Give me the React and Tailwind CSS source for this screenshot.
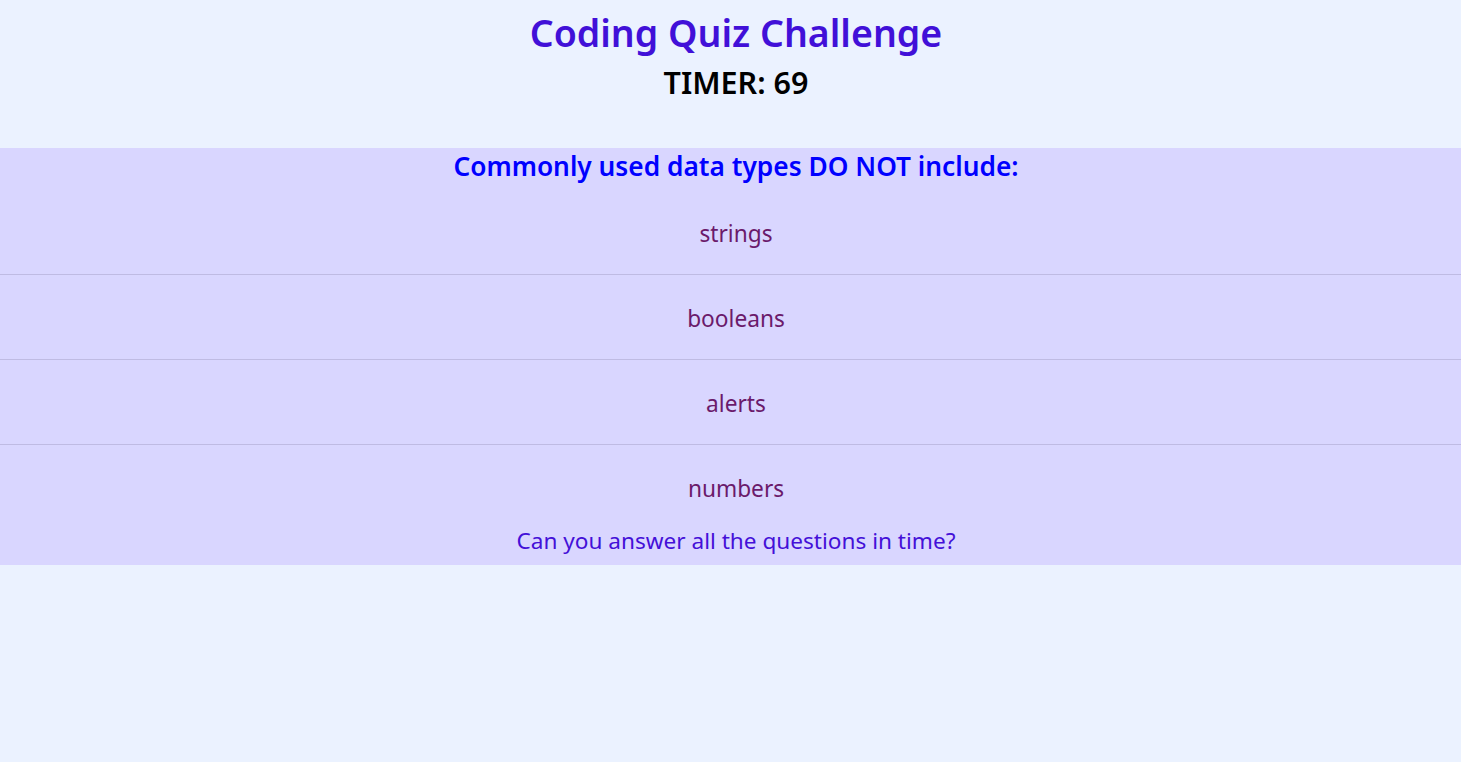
import React from 'react';

const answers = ['strings', 'booleans', 'alerts', 'numbers'];

export default function App() {
  return (
    <div
      className="w-full min-h-[762px] bg-[#ebf2ff] text-center"
      style={{ fontFamily: '"Noto Sans", "Open Sans", sans-serif' }}
    >
      {/* header */}
      <header className="pt-[8px] pl-[11px] h-[148px]">
        <h1 className="text-[37.5px] leading-[50px] font-semibold text-[#4110d8]">Coding Quiz Challenge</h1>
        <h2 className="mt-[4px] text-[30.5px] leading-[40px] font-semibold text-black">TIMER: 69</h2>
      </header>

      {/* quiz section */}
      <section className="bg-[#d9d6ff]">
        <h3 className="h-[41px] pl-[11px] text-[26.3px] leading-[36px] font-semibold text-[#0000ff]">
          Commonly used data types DO NOT include:
        </h3>
        <ul>
          {answers.map((a, i) => (
            <li
              key={a}
              className={
                'h-[85px] pl-[11px] pt-[5px] flex items-center justify-center text-[22.7px] text-[#6b1a6b] cursor-pointer ' +
                (i > 0 ? 'border-t border-[#bfbbe3]' : '')
              }
            >
              {a}
            </li>
          ))}
        </ul>
        <p className="h-[36px] pl-[11px] pt-px text-[22.6px] leading-[22px] text-[#4410d8]">
          Can you answer all the questions in time?
        </p>
      </section>
    </div>
  );
}
